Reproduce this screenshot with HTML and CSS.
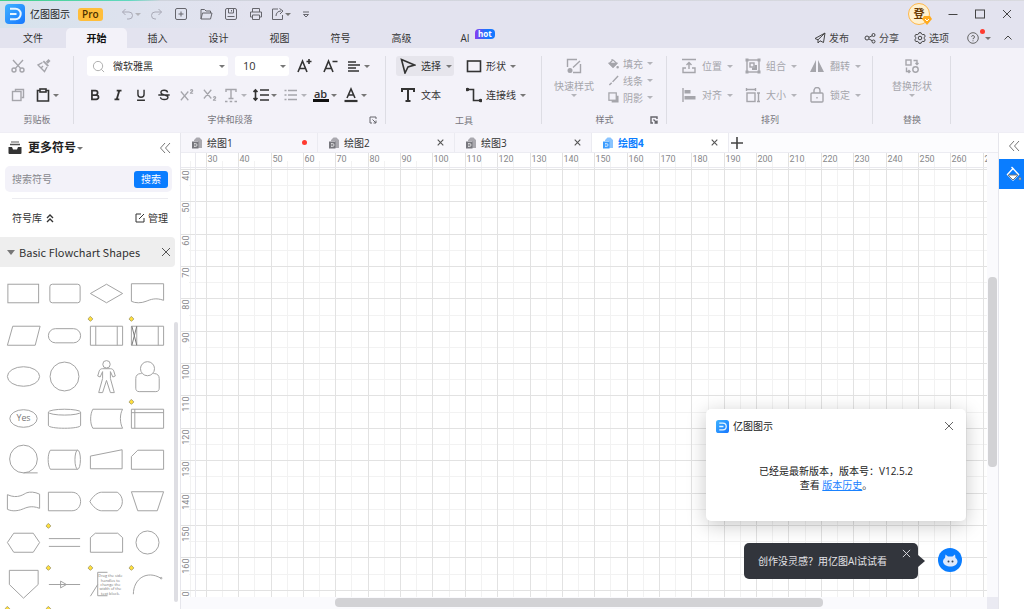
FILE: index.html
```html
<!DOCTYPE html>
<html lang="zh-CN">
<head>
<meta charset="utf-8">
<title>亿图图示</title>
<link rel="stylesheet" href="styles.css">
</head>
<body>
<svg class="defs" aria-hidden="true">
  <defs>
    <linearGradient id="logoFill" x1="0" y1="0" x2="1" y2="1"><stop offset="0" stop-color="#3fb2ff"/><stop offset="1" stop-color="#1677ff"/></linearGradient>
    <symbol id="logo" viewBox="0 0 20 20"><rect width="20" height="20" rx="4" fill="url(#logoFill)"/><path d="M5 4.800h5.500a5.200 5.200 0 0 1 0 10.400H5M5 10h6.500" fill="none" stroke="#e8f6ff" stroke-width="2"/></symbol>
    <symbol id="close" viewBox="0 0 10 10"><path d="M1 1l8 8M9 1l-8 8"/></symbol>
    <symbol id="back" viewBox="0 0 12 12"><path d="M6 1L1.500 6L6 11M11 1L6.500 6L11 11"/></symbol>
    <symbol id="launch" viewBox="0 0 8 8"><path d="M3 7H1V1h6v2M3.500 3.500l3.500 3.500M7 4.500V7H4.500"/></symbol>
    <symbol id="doc" viewBox="0 0 12 12"><path d="M3 3l2.500-2.500h3L11 3v8H7V4H3z" opacity=".6"/><path d="M1 4.500h6.500v7H1z"/><path d="M3 6.500h1.500a1.200 1.200 0 0 1 0 3H3M3 8h1.500" fill="none" stroke="#fff" stroke-width=".7"/></symbol>
    <symbol id="handle" viewBox="0 0 6 6"><path d="M3 .4L5.600 3L3 5.600L.4 3z" fill="#ffdf3d" stroke="#8f8a68" stroke-width=".7"/></symbol>
  </defs>
</svg>
<div class="app">
  <header class="titlebar">
    <svg class="logo"><use href="#logo"/></svg>
    <span class="app-name">亿图图示</span>
    <span class="pro">Pro</span>
    <div class="quick">
      <button class="q dim" aria-label="撤销"><svg viewBox="0 0 14 14"><path d="M4.500 2L1.500 5l3 3M1.500 5H8a3.500 3.500 0 0 1 0 7H6"/></svg><i class="caret"></i></button>
      <button class="q dim" aria-label="重做"><svg viewBox="0 0 14 14"><path d="M9.500 2l3 3l-3 3M12.500 5H6a3.500 3.500 0 0 0 0 7h1"/></svg></button>
      <button class="q" aria-label="新建"><svg viewBox="0 0 14 14"><rect x="1.500" y="1.500" width="11" height="11" rx="1.500"/><path d="M7 4.500v5M4.500 7h5"/></svg></button>
      <button class="q" aria-label="打开"><svg viewBox="0 0 14 14"><path d="M2 12V2.500h3.500l1.500 1.500h4.500v2M2 12l1.500-6H13l-1.500 6z"/></svg></button>
      <button class="q" aria-label="保存"><svg viewBox="0 0 14 14"><rect x="1.500" y="1.500" width="11" height="11" rx="1.500"/><path d="M4.500 1.500V6h5V1.500M7.500 3v1.500M3.500 9.500h7"/></svg></button>
      <button class="q" aria-label="打印"><svg viewBox="0 0 14 14"><path d="M3.500 5V1.500h7V5M3.500 10H1.500V5h11v5h-2M3.500 8h7v4.500h-7z"/></svg></button>
      <button class="q" aria-label="导出"><svg viewBox="0 0 14 14"><path d="M7 2H1.500v10.500h10V8M5 9c0-3 2-5 5-5M8.500 1.500L12 4L9 7"/></svg><i class="caret"></i></button>
      <button class="q" aria-label="更多"><svg viewBox="0 0 14 14"><path d="M4 5h6M4.500 7.500L7 10l2.500-2.500z"/></svg></button>
    </div>
    <div class="win">
      <button class="avatar" aria-label="登录">登<svg class="gem" viewBox="0 0 10 9"><path d="M2 0h6l2 3-5 6-5-6z" fill="#ffab1f"/><path d="M3 3l2 2 2-2" fill="none" stroke="#fff"/></svg></button>
      <button class="w" aria-label="最小化"><svg viewBox="0 0 12 12"><path d="M1.500 6.500h9"/></svg></button>
      <button class="w" aria-label="最大化"><svg viewBox="0 0 12 12"><rect x="1.500" y="2" width="9" height="8"/></svg></button>
      <button class="w" aria-label="关闭"><svg viewBox="0 0 12 12"><path d="M2 2l8 8M10 2l-8 8"/></svg></button>
    </div>
  </header>

  <nav class="menubar">
    <button class="menu first">文件</button><button class="menu active">开始</button><button class="menu">插入</button><button class="menu">设计</button><button class="menu">视图</button><button class="menu">符号</button><button class="menu">高级</button><button class="menu ai">AI<span class="hot">hot</span></button>
    <div class="menu-right">
      <button class="mr"><svg viewBox="0 0 12 12"><path d="M11 1L1 6.500l3 1.300L11 1L9.500 10.500L6 8.800M4 7.800V11l2-2.200"/></svg>发布</button>
      <button class="mr"><svg viewBox="0 0 12 12"><circle cx="3" cy="6" r="2"/><circle cx="9.500" cy="3" r="1.500"/><circle cx="9.500" cy="9.500" r="1.500"/><path d="M5 5.300l3-1.500M5 7l3 1.600"/></svg>分享</button>
      <button class="mr"><svg viewBox="0 0 12 12"><path d="M4.500 2L5 .7h2L7.500 2l1.300.7 1.400-.3 1 1.700-.9 1.200v1.400l.9 1.200-1 1.700-1.400-.3-1.300.7L7 11.300H5L4.500 10l-1.300-.7-1.400.3-1-1.700.9-1.200V5.300L.8 4.100l1-1.700 1.400.3z"/><circle cx="6" cy="6" r="1.800"/></svg>选项</button>
      <button class="mr help" aria-label="帮助"><svg viewBox="0 0 12 12"><circle cx="6" cy="6" r="5.300"/><path d="M4.500 4.700a1.500 1.500 0 1 1 1.500 1.800v.7M6 8.300v1"/></svg><i class="caret"></i><span class="dot"></span></button>
      <button class="mr" aria-label="收起"><svg viewBox="0 0 12 12"><path d="M2.500 7.500L6 4l3.500 3.500"/></svg></button>
    </div>
  </nav>

  <section class="ribbon">
    <div class="group g-clip">
      <div class="row">
        <button class="t dim" aria-label="剪切"><svg viewBox="0 0 16 16"><circle cx="4" cy="12" r="2"/><circle cx="12" cy="12" r="2"/><path d="M3 2l7.800 8.600M13 2l-7.800 8.600"/></svg></button>
        <button class="t dim" aria-label="格式刷"><svg viewBox="0 0 16 16"><path class="fill" d="M12.500 1l2 2-2.700 2.700-2-2zM8 2.500L13 7.500l-1.300 1.300-5-5z" stroke="none"/><path d="M6.500 4.500L2 7l6.500 6.500 2.500-4.500M5 10l2-2"/></svg></button>
      </div>
      <div class="row">
        <button class="t dim" aria-label="复制"><svg viewBox="0 0 16 16"><path d="M5.500 4.500V2.500h8v8h-2"/><rect x="2.500" y="4.500" width="8.500" height="9"/></svg></button>
        <button class="t" aria-label="粘贴"><svg class="bold" viewBox="0 0 16 16"><path d="M5 3.500H2.500v10.500h11V3.500H11"/><rect x="5" y="2" width="6" height="3"/></svg><i class="caret"></i></button>
      </div>
      <div class="label">剪贴板</div>
    </div>

    <div class="group g-font">
      <div class="row font-row">
        <label class="field font"><svg viewBox="0 0 14 14"><circle cx="6.500" cy="6.500" r="5"/><path d="M10 10l3 3"/></svg><select aria-label="字体"><option>微软雅黑</option></select><i class="caret"></i></label>
        <label class="field size"><select aria-label="字号"><option>10</option></select><i class="caret"></i></label>
        <button class="t" aria-label="增大字号"><svg class="bold" viewBox="0 0 16 16"><path d="M2 14L6.500 3L11 14M3.500 10.500h6M13 1v5M10.500 3.500h5"/></svg></button>
        <button class="t" aria-label="减小字号"><svg class="bold" viewBox="0 0 16 16"><path d="M2 14L6.500 3L11 14M3.500 10.500h6M10.500 3.500h5"/></svg></button>
        <button class="t" aria-label="对齐方式"><svg class="bold" viewBox="0 0 16 16"><path d="M2 4h8M2 7h12M2 10h8M2 13h11"/></svg><i class="caret"></i></button>
      </div>
      <div class="row format-row">
        <button class="f" aria-label="加粗"><svg class="heavy" viewBox="0 0 16 16"><path d="M4.500 3h4a2.400 2.400 0 0 1 0 5h-4zM4.500 8h5a2.500 2.500 0 0 1 0 5h-5z"/></svg></button>
        <button class="f" aria-label="斜体"><svg class="heavy" viewBox="0 0 16 16"><path d="M6.500 3h5.500M4 13h5.500M9.500 3l-3 10"/></svg></button>
        <button class="f" aria-label="下划线"><svg class="bold" viewBox="0 0 16 16"><path d="M4.500 2v5a3.500 3.500 0 0 0 7 0V2M3.500 14h9"/></svg></button>
        <button class="f" aria-label="删除线"><svg class="bold" viewBox="0 0 16 16"><path d="M12 5c0-3-7.500-3.500-7.500 0 0 4 8 2 8 5.500 0 3.500-8.500 3.500-8.500 0M1.500 8h13"/></svg></button>
        <button class="f dim" aria-label="上标"><svg viewBox="0 0 16 16"><path d="M1 4l8.500 10M9.500 4L1 14M12 3c0-1.500 2.500-1.500 2.500 0 0 1-2.500 1.500-2.500 3h3"/></svg></button>
        <button class="f dim" aria-label="下标"><svg viewBox="0 0 16 16"><path d="M1 2l8.500 10M9.500 2L1 12M12 11c0-1.500 2.500-1.500 2.500 0 0 1-2.500 1.500-2.500 3h3"/></svg></button>
        <button class="d dim" aria-label="文字效果"><svg viewBox="0 0 16 16"><path d="M3 5V2.500h10V5M8 2.500v9M5.500 11.500h5M2 14.500h2.500M6.700 14.500h2.500M11.500 14.500H14"/></svg><i class="caret"></i></button>
        <button class="d" aria-label="行距"><svg class="bold" viewBox="0 0 16 16"><path d="M7 3h9M7 8h9M7 13h9M2.500 3v10M.5 5l2-2 2 2M.5 11l2 2 2-2"/></svg><i class="caret"></i></button>
        <button class="d dim" aria-label="列表"><svg viewBox="0 0 16 16"><path d="M5 3.500h9M5 8h9M5 12.500h9M1.500 3.500h2M1.500 8h2M1.500 12.500h2"/></svg><i class="caret"></i></button>
        <button class="d highlight" aria-label="突出显示"><span>ab</span><i class="caret"></i></button>
        <button class="d" aria-label="字体颜色"><svg class="bold" viewBox="0 0 16 16"><path d="M4 11L8 2l4 9M5.500 8h5"/><path d="M1.500 14h13" stroke-width="2.200"/></svg><i class="caret"></i></button>
      </div>
      <div class="label">字体和段落</div>
      <button class="launch" aria-label="字体设置"><svg><use href="#launch"/></svg></button>
    </div>

    <div class="group g-tool">
      <div class="pair">
        <button class="c selected"><svg class="bold" viewBox="0 0 16 16"><path d="M1.500 1.500l13 5.500-6.500 2L5 15z"/></svg>选择<i class="caret"></i></button>
        <button class="c"><svg class="bold" viewBox="0 0 16 16"><rect x="1.500" y="3" width="13" height="10.500"/></svg>形状<i class="caret"></i></button>
        <button class="c"><svg class="heavy" viewBox="0 0 16 16"><path d="M2 5V2h12v3M8 2v12M5.500 14h5"/></svg>文本</button>
        <button class="c"><svg class="bold" viewBox="0 0 16 16"><path d="M2 2.500h5.500v11H14"/><circle class="fill" cx="1.500" cy="2.500" r="1"/><circle class="fill" cx="14.500" cy="13.500" r="1"/></svg>连接线<i class="caret"></i></button>
      </div>
      <div class="label">工具</div>
    </div>

    <div class="group g-style dim">
      <div class="style-body">
        <button class="big"><svg class="bold" viewBox="0 0 16 16"><path d="M11 1.500H1.500V9M14.500 6v8.500H7M14 3L7 9.500"/><circle class="fill" cx="4" cy="12.500" r="1.800"/></svg><span>快速样式</span><i class="caret"></i></button>
        <div class="stack">
          <button class="s"><svg viewBox="0 0 12 12"><path class="fill" d="M1.500 6h8L5.500 10z"/><path d="M4.500 1v2L1.500 6l4 4 4-4-4-4"/><circle class="fill" cx="10.500" cy="10" r=".7"/></svg>填充<i class="caret"></i></button>
          <button class="s"><svg viewBox="0 0 12 12"><path class="bold" d="M11 1L5 7.500M4 8.500L1.500 11"/></svg>线条<i class="caret"></i></button>
          <button class="s"><svg viewBox="0 0 12 12"><path class="fill" d="M9 4h2.500v7.500H4V9h5z" stroke="none"/><rect x="1" y="1" width="8" height="8"/></svg>阴影<i class="caret"></i></button>
        </div>
      </div>
      <div class="label">样式</div>
      <button class="launch" aria-label="样式设置"><svg><use href="#launch"/></svg></button>
    </div>

    <div class="group g-arrange dim">
      <div class="trio">
        <button class="c"><svg viewBox="0 0 16 16"><path d="M1 1.500h14M8 11V4.500M5.500 7L8 4.500 10.500 7M5 10H2v4.500h12V10h-3"/></svg>位置<i class="caret"></i></button>
        <button class="c"><svg viewBox="0 0 16 16"><rect x="2" y="2" width="12" height="12"/><path class="fill" d="M.5.5h3v3h-3zM12.500.5h3v3h-3zM.5 12.500h3v3h-3zM12.500 12.500h3v3h-3z" stroke="none"/><rect x="5" y="5" width="4" height="4"/><path class="fill" d="M9.500 7H12v5H7V9.500h2.500z" stroke="none"/></svg>组合<i class="caret"></i></button>
        <button class="c"><svg viewBox="0 0 16 16"><path class="fill" d="M7 2v12H1zM9 2v12h6z" stroke="none"/></svg>翻转<i class="caret"></i></button>
        <button class="c"><svg viewBox="0 0 16 16"><path d="M2 1v14"/><path class="fill" d="M3.500 3h6v3.500h-6zM3.500 9h11v3.500h-11z" stroke="none"/></svg>对齐<i class="caret"></i></button>
        <button class="c"><svg viewBox="0 0 16 16"><rect x="2" y="6" width="8" height="8.500"/><path d="M1.500 2.500h9M1.500 1v3M10.500 1v3M13.500 6v8.500M12 6h3M12 14.500h3"/></svg>大小<i class="caret"></i></button>
        <button class="c"><svg viewBox="0 0 16 16"><rect x="2" y="6" width="12" height="9" rx="1"/><path d="M5 6V3.500a3 3 0 0 1 6 0V6M8 10v1.500"/></svg>锁定<i class="caret"></i></button>
      </div>
      <div class="label">排列</div>
    </div>

    <div class="group g-swap dim">
      <button class="big"><svg viewBox="0 0 16 16"><rect x="2" y="2" width="5" height="5"/><circle cx="11.500" cy="11.500" r="2.700"/><path d="M9.500 2.500h3.500v4M11.500 5l1.500 1.500L14.500 5M2.500 9.500v4H6M4.500 12L6 13.500 4.500 15"/></svg><span>替换形状</span><i class="caret"></i></button>
      <div class="label">替换</div>
    </div>
  </section>

  <main class="workspace">
    <aside class="library">
      <div class="lib-head">
        <svg class="tray" viewBox="0 0 14 14"><path d="M3 1h8" stroke="#777" stroke-width="1.200"/><path d="M2 3.500h10" stroke="#555" stroke-width="1.500"/><path d="M.5 6H4l1 2.500h4L10 6h3.500v6a1 1 0 0 1-1 1h-11a1 1 0 0 1-1-1z" fill="#333"/></svg>
        <h2>更多符号</h2><i class="caret"></i>
        <button class="icon-btn collapse" aria-label="收起面板"><svg><use href="#back"/></svg></button>
      </div>
      <form class="search"><input type="text" placeholder="搜索符号" aria-label="搜索符号"><button type="button">搜索</button></form>
      <div class="lib-tools"><button class="lt">符号库<svg class="chevrons" viewBox="0 0 10 10"><path d="M2 5l3-3 3 3M2 9l3-3 3 3"/></svg></button><button class="lt"><svg viewBox="0 0 10 10"><path d="M6 1H1v8h8V5M4 6l5-5"/></svg>管理</button></div>
      <div class="section"><i class="caret open"></i><span>Basic Flowchart Shapes</span><button class="icon-btn" aria-label="关闭分类"><svg><use href="#close"/></svg></button></div>
      <div class="shapes">
        <svg viewBox="0 0 42 42"><rect x="5" y="11.500" width="31.500" height="19"/></svg>
        <svg viewBox="0 0 42 42"><rect x="6" y="11.500" width="31" height="19" rx="2.500"/></svg>
        <svg viewBox="0 0 42 42"><path d="M4.500 21L21 11.500 37.500 21 21 30.500z"/></svg>
        <svg viewBox="0 0 42 42"><path d="M4.500 29V11h33v17c-8-3-13-1-18 1s-11 2-15 0z"/></svg>

        <svg viewBox="0 0 42 42"><path d="M10 11.500h28l-5 19.500H4.500z"/></svg>
        <svg viewBox="0 0 42 42"><rect x="4.500" y="14" width="33" height="14.500" rx="7.200"/></svg>
        <svg viewBox="0 0 42 42"><path d="M4.500 11.500h33V31h-33zM10 11.500V31M32 11.500V31"/><use href="#handle" x="1.500" y="1" width="6" height="6"/></svg>
        <svg viewBox="0 0 42 42"><path d="M4.500 11.500h33V31h-33zM10 11.500V31M32 11.500V31"/><path d="M5 11.500L10 31M10 11.500L5 31" stroke="#777"/><use href="#handle" x="1.500" y="1" width="6" height="6"/></svg>

        <svg viewBox="0 0 42 42"><ellipse cx="21" cy="21" rx="16.500" ry="10"/></svg>
        <svg viewBox="0 0 42 42"><circle cx="21" cy="21" r="14.800"/></svg>
        <svg viewBox="0 0 42 42"><circle cx="21" cy="8.500" r="3.800"/><path d="M17 13h8c2 0 3 1 3.500 2.500L30 20.500l-2.500 1L25 16v7l4 14.500h-4L21 25l-4 12.500h-4L17 23v-7l-2.500 5.500-2.500-1 1.500-5C14 14 15 13 17 13z"/></svg>
        <svg viewBox="0 0 42 42"><path d="M15 18h-1c-3 0-5 2-5 5v10c0 2 1 3.500 3.500 3.500h17c2.500 0 3.500-1.500 3.500-3.500V23c0-3-2-5-5-5h-1"/><circle cx="21" cy="13" r="7.200"/></svg>

        <svg viewBox="0 0 42 42"><ellipse cx="21" cy="21" rx="14" ry="9"/><text x="21" y="24" text-anchor="middle">Yes</text></svg>
        <svg viewBox="0 0 42 42"><ellipse cx="21" cy="14.500" rx="16.500" ry="3"/><path d="M4.500 14.500V28c0 4 33 4 33 0V14.500"/></svg>
        <svg viewBox="0 0 42 42"><path d="M7 11.500h30.500c-3 5-3 14 0 19.500H7c-3-5-3-14 0-19.500z"/></svg>
        <svg viewBox="0 0 42 42"><path d="M4.500 11.500h33V31h-33zM4.500 15h33M8 11.500V31"/><use href="#handle" x="1.500" y="1" width="6" height="6"/></svg>

        <svg viewBox="0 0 42 42"><circle cx="21" cy="20.500" r="14.200"/><path d="M21 34.700h14.500"/></svg>
        <svg viewBox="0 0 42 42"><path d="M6.500 11.500h28M6.500 31h28M6.500 11.500c-3 4-3 15 0 19.500"/><ellipse cx="34.500" cy="21.200" rx="2.800" ry="9.800"/></svg>
        <svg viewBox="0 0 42 42"><path d="M4.500 17.500L37 11v19.500H4.500z"/></svg>
        <svg viewBox="0 0 42 42"><path d="M11 11.500h26.500V31h-33V18z"/></svg>

        <svg viewBox="0 0 42 42"><path d="M4.500 14c11 5 17-1 20-2s8-1 13 1.500V28c-9-3.500-14-.5-18 1s-10 2.500-15 0z"/></svg>
        <svg viewBox="0 0 42 42"><path d="M4.500 11.500h24c12 0 12 19 0 19h-24z"/></svg>
        <svg viewBox="0 0 42 42"><path d="M16 11.500h16c7 4 7 15 0 19H16c-4 0-9-4-12-9.500 3-5.500 8-9.500 12-9.500z"/></svg>
        <svg viewBox="0 0 42 42"><path d="M4.500 11h33l-6.500 19.500H11z"/></svg>

        <svg viewBox="0 0 42 42"><path d="M11 11.500h20l6.500 9.500L31 31H11l-6.500-10z"/></svg>
        <svg viewBox="0 0 42 42"><path d="M5 17h32M5 25h32"/><use href="#handle" x="1.500" y="1" width="6" height="6"/></svg>
        <svg viewBox="0 0 42 42"><path d="M9.500 11.500h23l5 4.500v15h-33V16z"/></svg>
        <svg viewBox="0 0 42 42"><circle cx="21" cy="21" r="11.800"/></svg>

        <svg viewBox="0 0 42 42"><path d="M6.500 6.500H36V21L21 35 6.500 21z"/><use href="#handle" x="1.500" y="43" width="6" height="6"/></svg>
        <svg viewBox="0 0 42 42"><path d="M5 21h32M17 17.500v7l6-3.500z"/><use href="#handle" x="1.500" y="1" width="6" height="6"/><use href="#handle" x="1.500" y="43" width="6" height="6"/></svg>
        <svg viewBox="0 0 42 42"><path d="M22 8.500H12v24h10M12 21L4.500 33"/><text class="note" x="25" y="13.500" text-anchor="middle">Drag the side<tspan x="25" dy="4.500">handles to</tspan><tspan x="25" dy="4.500">change the</tspan><tspan x="25" dy="4.500">width of the</tspan><tspan x="25" dy="4.500">text block.</tspan></text><use href="#handle" x="1.500" y="1" width="6" height="6"/></svg>
        <svg viewBox="0 0 42 42"><path d="M6.500 31c0-16 14-25 28-16.500"/><circle cx="35" cy="14.500" r=".8"/><use href="#handle" x="1.500" y="1" width="6" height="6"/></svg>
      </div>
      <div class="lib-scroll"></div>
    </aside>

    <section class="editor">
      <div class="doc-tabs">
        <div class="doc"><svg><use href="#doc"/></svg><span>绘图1</span><i class="unsaved"></i></div>
        <div class="doc"><svg><use href="#doc"/></svg><span>绘图2</span><button class="icon-btn" aria-label="关闭 绘图2"><svg><use href="#close"/></svg></button></div>
        <div class="doc"><svg><use href="#doc"/></svg><span>绘图3</span><button class="icon-btn" aria-label="关闭 绘图3"><svg><use href="#close"/></svg></button></div>
        <div class="doc current"><svg><use href="#doc"/></svg><span>绘图4</span><button class="icon-btn" aria-label="关闭 绘图4"><svg><use href="#close"/></svg></button></div>
        <button class="icon-btn add" aria-label="新建绘图"><svg viewBox="0 0 12 12"><path d="M6 0v12M0 6h12"/></svg></button>
      </div>
      <div class="canvas-area">
        <svg class="canvas" id="canvas"></svg>
        <div class="vbar"><div class="vthumb"></div></div>
        <div class="hbar"><div class="hthumb"></div></div>
        <div class="corner"></div>
      </div>
    </section>

    <aside class="rail">
      <button class="icon-btn" aria-label="展开面板"><svg><use href="#back"/></svg></button>
      <button class="rail-fill" aria-label="填充"><svg viewBox="0 0 16 16"><path d="M5.500 1L8 3.500M7 2.500L1.500 8.500L7 14L12.500 8.500z" fill="none" stroke="#fff" stroke-width="1.400"/><path d="M2 9h10L7 14z" fill="#fff"/><path d="M14 11c1.500 2 1.200 3 0 3s-1.500-1 0-3z" fill="#fff"/></svg></button>
    </aside>

    <div class="dialog" role="dialog" aria-label="亿图图示">
      <div class="dialog-head"><svg class="mini"><use href="#logo"/></svg><span>亿图图示</span><button class="icon-btn" aria-label="关闭"><svg><use href="#close"/></svg></button></div>
      <p>已经是最新版本，版本号：V12.5.2<br>查看 <a href="#">版本历史</a>。</p>
    </div>
    <div class="tip"><span>创作没灵感？用亿图AI试试看</span><button class="icon-btn" aria-label="关闭提示"><svg><use href="#close"/></svg></button></div>
    <button class="bot" aria-label="AI 助手"><svg viewBox="0 0 24 24"><path d="M7.500 6.500l2.500 2h4.500l2.500-2 .5 3.500c1.500 1 2 2.500 2 3.500 0 3-3.500 5-7 5s-7.500-2-7.500-5c0-1 .5-2.500 2-3.500z" fill="#dfe9fb"/><circle cx="10.500" cy="13.500" r="1" fill="#345"/><circle cx="14.500" cy="13.500" r="1" fill="#345"/></svg></button>
  </main>
</div>
<script src="canvas.js"></script>
</body>
</html>
```

FILE: canvas.js
```javascript
// Draws the page grid and both rulers: one major step is 10 mm.
const svg = document.getElementById('canvas');
const NS = 'http://www.w3.org/2000/svg';
const STEP = 32.37;
const RULER_W = 15, RULER_H = 15;
const START_X = 25.3, START_Y = 16.4;

function line(x1, y1, x2, y2, cls) {
  const el = document.createElementNS(NS, 'line');
  el.setAttribute('x1', x1);
  el.setAttribute('y1', y1);
  el.setAttribute('x2', x2);
  el.setAttribute('y2', y2);
  el.setAttribute('class', cls);
  svg.appendChild(el);
}

function label(x, y, value, vertical) {
  const el = document.createElementNS(NS, 'text');
  el.textContent = value;
  if (vertical) {
    el.setAttribute('transform', `translate(${x} ${y}) rotate(-90)`);
    el.setAttribute('text-anchor', 'end');
  } else {
    el.setAttribute('x', x);
    el.setAttribute('y', y);
  }
  svg.appendChild(el);
}

const snap = (v) => Math.floor(v) + 0.5;

function draw() {
  svg.replaceChildren();
  const right = svg.clientWidth, bottom = svg.clientHeight;
  for (let x = START_X - STEP / 2; x < right; x += STEP) {
    line(snap(x), 8, snap(x), bottom, 'minor');
  }
  for (let y = START_Y + STEP / 2; y < bottom; y += STEP) {
    line(8, snap(y), right, snap(y), 'minor');
  }
  for (let x = START_X, mm = 30; x < right; x += STEP, mm += 10) {
    line(snap(x), 0, snap(x), bottom, 'major');
    label(snap(x) + 1, 9, mm, false);
  }
  for (let y = START_Y, mm = 40; y < bottom; y += STEP, mm += 10) {
    line(0, snap(y), right, snap(y), 'major');
    label(8, snap(y) + 1, mm, true);
  }
  line(RULER_W - 0.5, 0, RULER_W - 0.5, bottom, 'edge');
  line(0, RULER_H - 0.5, right, RULER_H - 0.5, 'edge');
}

draw();
window.addEventListener('resize', draw);
```

FILE: styles.css
```css
* { box-sizing: border-box; }
html, body { height: 100%; margin: 0; }
body { font: 10px/14px "Open Sans", "Noto Sans CJK SC", sans-serif; color: #333; overflow: hidden; }
button { border: 0; padding: 0; margin: 0; background: none; font: inherit; color: inherit; display: flex; align-items: center; justify-content: center; white-space: nowrap; }
svg { fill: none; stroke: currentColor; flex: none; }
.defs { position: absolute; width: 0; height: 0; }
.fill { fill: currentColor; }
.bold { stroke-width: 1.6; }
.heavy { stroke-width: 2; }
.dim { color: #a5a5ab; }
.ribbon .dim svg { stroke-width: 1.4; }
.caret { flex: none; width: 0; height: 0; border: 3px solid transparent; border-top: 3px solid #777; border-bottom: 0; }
.dim .caret { border-top-color: #b4b4ba; }
.icon-btn svg { width: 10px; height: 10px; }

.app { height: 100vh; display: flex; flex-direction: column; background: #e3e3ef; }

.titlebar { height: 28px; flex: none; display: flex; align-items: center; padding: 0 4px 0 5px; background: linear-gradient(90deg, #3fcf86, #62d8c0 130px, #cfd3dc 160px, #d9dadf) top / 100% 1px no-repeat, linear-gradient(90deg, #d6e3ec, #dde2ee 120px, #e3e3ef 260px); }
.logo { width: 20px; height: 20px; margin-right: 5px; stroke: none; }
.app-name { margin-right: 8px; color: #222; }
.pro { background: #ffbe3b; color: #4e3200; border-radius: 3px; padding: 0 4px; line-height: 13px; font-weight: 600; }
.quick { display: flex; margin-left: 15px; color: #66666d; }
.q { height: 20px; width: 25px; }
.q svg { width: 14px; height: 14px; }
.q:first-child { width: 26px; }
.q.dim { color: #a9a9b6; }
.win { margin-left: auto; display: flex; align-items: center; color: #444; }
.w { width: 27px; height: 22px; }
.w svg { width: 12px; height: 12px; }
.avatar { position: relative; width: 22px; height: 22px; margin-right: 9px; border: 1px solid #ffb84a; border-radius: 50%; background: #fff1cf; color: #6b3a05; font-weight: 700; font-size: 11px; }
.gem { position: absolute; right: -3px; bottom: -1px; width: 10px; height: 9px; stroke: none; }

.menubar { height: 20px; flex: none; display: flex; padding-right: 10px; }
.menu { width: 61px; position: relative; }
.menu.first { width: 66px; }
.menu.ai { width: 66px; }
.menu.active { background: #f3f2f9; border-radius: 5px 5px 0 0; font-weight: 700; color: #111; }
.hot { position: absolute; left: 43px; top: 1px; padding: 0 3px; border-radius: 4px 4px 4px 0; background: linear-gradient(90deg, #8a3df0, #1677ff 60%); color: #fff; font-weight: 700; font-size: 8px; line-height: 10px; }
.menu-right { margin-left: auto; display: flex; gap: 15px; color: #444; }
.mr { gap: 3px; position: relative; }
.mr svg { width: 12px; height: 12px; }
.help { gap: 6px; margin-left: 3px; color: #666; }
.dot { position: absolute; left: 13px; top: 1px; width: 5px; height: 5px; border-radius: 50%; background: #ff3b30; }
.menu-right .mr:last-child { margin-left: -4px; }

.ribbon { flex: none; display: flex; background: #f3f2f9; border-bottom: 1px solid #efeef5; }
.group { position: relative; flex: none; display: flex; flex-direction: column; gap: 7px; padding: 7px 0 5px; background: linear-gradient(#dddde4, #dddde4) right 8px / 1px 68px no-repeat; }
.row { display: flex; height: 22px; align-items: center; }
.label { text-align: center; font-size: 9px; line-height: 13px; color: #77777d; }
.launch { position: absolute; right: 9px; bottom: 8px; color: #66666c; }
.launch svg { width: 8px; height: 8px; }
.t { height: 20px; width: 26px; gap: 2px; }
.t svg, .f svg, .d svg, .c svg, .big svg { width: 16px; height: 16px; }
.g-clip { width: 74px; }
.g-clip .row { padding-left: 5px; }
.g-clip .t:last-child:has(.caret) { width: 32px; }
.g-font { width: 312px; }
.font-row { padding-left: 13px; }
.field { display: flex; align-items: center; height: 20px; background: #fff; border-radius: 3px; }
.field select { flex: 1; min-width: 0; appearance: none; border: 0; padding: 0; background: none; font: inherit; color: #333; outline: 0; }
.font { width: 141px; padding: 0 3px 0 5px; gap: 8px; margin-right: 7px; }
.font svg { width: 13px; height: 13px; color: #aaa; }
.size { width: 54px; padding: 0 3px 0 8px; margin-right: 2px; }
.size select { font-size: 11px; }
.font-row .t:last-child { margin-left: 3px; width: 24px; }
.format-row { padding-left: 9px; }
.f { width: 23px; height: 20px; }
.f svg { width: 14px; height: 14px; }
.d { width: 30px; height: 20px; gap: 2px; padding-right: 3px; }
.highlight span { width: 16px; line-height: 11px; font-size: 11px; font-weight: 600; border-bottom: 3px solid #111; }
.c { height: 20px; gap: 4px; justify-content: flex-start; }
.pair { display: grid; grid-template-columns: 70px 76px; row-gap: 9px; padding: 1px 0; margin-bottom: 1px; }
.g-tool { width: 156px; padding-left: 10px; color: #333; }
.g-tool .label { margin-left: -10px; }
.pair .c:nth-child(odd) { padding-left: 4px; width: 58px; gap: 5px; }
.pair .selected { background: #e6e5ec; border-radius: 3px; }
.g-style { width: 125px; }
.style-body { display: flex; height: 51px; padding-left: 12px; gap: 14px; }
.big { flex-direction: column; gap: 5px; height: 51px; justify-content: flex-start; padding-top: 3px; }
.big .caret { margin-top: -4px; }
.stack { display: flex; flex-direction: column; gap: 2px; padding-top: 1px; }
.s { height: 15px; gap: 4px; }
.s svg { width: 11px; height: 11px; }
.g-arrange { width: 206px; }
.trio { display: grid; grid-template-columns: repeat(3, 64px); row-gap: 9px; padding: 1px 0 1px 14px; }
.trio .c { gap: 5px; }
.g-swap { width: 78px; }
.g-style .label, .g-arrange .label, .g-swap .label { color: #77777d; }

.workspace { position: relative; flex: 1; min-height: 0; display: flex; background: #fff; }
.library { position: relative; width: 181px; flex: none; display: flex; flex-direction: column; border-right: 1px solid #e6e6ec; }
.lib-head { display: flex; align-items: center; height: 33px; padding: 0 9px 3px 8px; }
.tray { width: 14px; height: 14px; margin-right: 6px; stroke: none; }
.lib-head h2 { margin: 0 1px 0 0; font-size: 12px; line-height: 16px; font-weight: 700; color: #222; }
.collapse { margin-left: auto; color: #777; }
.collapse svg, .rail svg { width: 12px; height: 12px; }
.search { display: flex; align-items: center; height: 26px; margin: 0 8px 6px 5px; padding: 0 4px 0 7px; background: #f3f2f9; border-radius: 5px; }
.search input { flex: 1; min-width: 0; border: 0; padding: 0; background: none; font: inherit; outline: 0; }
.search input::placeholder { color: #88888e; opacity: 1; }
.search button { width: 34px; height: 17px; background: #0a7dff; color: #fff; border-radius: 3px; }
.lib-tools { display: flex; justify-content: space-between; align-items: center; height: 39px; margin: 0 12px 0 12px; border-top: 1px solid #ececf0; }
.lt { gap: 3px; }
.lt svg { width: 10px; height: 10px; }
.lt .chevrons { stroke-width: 1.4; }
.section { display: flex; align-items: center; height: 30px; width: 175px; padding: 0 4px 0 7px; background: #eeeeee; border-radius: 0 4px 4px 0; font: 11px/14px "Noto Sans CJK SC", sans-serif; gap: 4px; }
.section .open { border-width: 5px 4px 0; }
.section .icon-btn { margin-left: auto; color: #555; }
.shapes { flex: 1; min-height: 0; display: grid; grid-template-columns: repeat(4, 1fr); grid-auto-rows: 1fr; margin: 6px 12px 4px 3px; }
.shapes > svg { width: 41px; height: 41px; overflow: visible; place-self: center; stroke: #a0a0a0; min-height: 0; }
.shapes text { font-size: 9px; fill: #777; stroke: none; }
.shapes .note { font-size: 4px; }
.lib-scroll { position: absolute; right: 2px; top: 189px; bottom: 7px; width: 4px; border-radius: 2px; background: #dedee3; }

.editor { flex: 1; min-width: 0; display: flex; flex-direction: column; }
.doc-tabs { display: flex; height: 20px; background: #fcfcfe; border-bottom: 1px solid #ececf2; }
.doc { display: flex; align-items: center; width: 137px; padding: 0 10px 0 10px; background: #f7f6fb; border-right: 1px solid #ebebf1; }
.doc > svg { width: 12px; height: 12px; margin-right: 4px; fill: #77777d; stroke: none; }
.doc .icon-btn { margin-left: auto; color: #555; }
.doc .icon-btn svg { width: 7px; height: 7px; stroke-width: 1.6; }
.unsaved { margin-left: auto; width: 5px; height: 5px; border-radius: 50%; background: #ff3b30; }
.current { background: #fff; color: #0a7dff; font-weight: 700; }
.current > svg { fill: #3c9dff; }
.add { margin-left: 2px; color: #444; }
.add svg { width: 12px; height: 12px; stroke-width: 1.6; }
.canvas-area { flex: 1; min-height: 0; display: grid; grid-template-columns: 1fr 11px; grid-template-rows: 1fr 12px; }
.canvas { width: 100%; height: 100%; min-height: 0; overflow: hidden; }
.canvas .minor { stroke: #f2f2f2; }
.canvas .major { stroke: #e2e2e2; }
.canvas .edge { stroke: #e9e9ee; }
.canvas text { font: 9px Roboto, sans-serif; fill: #88888c; stroke: none; }
.vbar { background: #fafafd; padding: 124px 1px 130px; }
.vthumb { height: 100%; border-radius: 4px; background: #d2d2d5; }
.hbar { background: #fafafd; padding: 1px 164px 2px 154px; }
.hthumb { height: 100%; border-radius: 4px; background: #d2d2d5; }
.corner { background: #eaeaf2; }

.rail { width: 26px; flex: none; display: flex; flex-direction: column; border-left: 1px solid #e6e6ec; color: #777; }
.rail .icon-btn { height: 26px; padding-left: 4px; }
.rail-fill { height: 30px; padding-left: 4px; background: #0a7dff; }
.rail .rail-fill svg { width: 16px; height: 16px; }

.dialog { position: absolute; right: 58px; bottom: 88px; width: 260px; height: 112px; padding: 10px; background: #fff; border-radius: 5px; box-shadow: 0 4px 20px rgba(0, 0, 0, .22); color: #222; }
.dialog-head { display: flex; align-items: center; gap: 4px; height: 14px; }
.mini { width: 13px; height: 13px; stroke: none; }
.dialog-head .icon-btn { margin: 0 2px 0 auto; color: #666; }
.dialog p { margin: 31px 0 0; text-align: center; }
.dialog a { color: #1a82ff; }
.tip { position: absolute; right: 106px; bottom: 30px; width: 174px; height: 36px; padding: 0 7px 0 14px; display: flex; align-items: center; justify-content: space-between; background: #32353c; color: #e2e2e6; border-radius: 5px; }
.tip::after { content: ""; position: absolute; left: 100%; top: 12px; border: 6px solid transparent; border-left: 7px solid #32353c; border-right: 0; }
.tip .icon-btn { align-self: flex-start; margin-top: 6px; }
.tip .icon-btn svg { width: 9px; height: 9px; }
.bot { position: absolute; right: 62px; bottom: 37px; width: 24px; height: 24px; border-radius: 50%; background: #0a7dff; }
.bot svg { width: 24px; height: 24px; stroke: none; }
```
